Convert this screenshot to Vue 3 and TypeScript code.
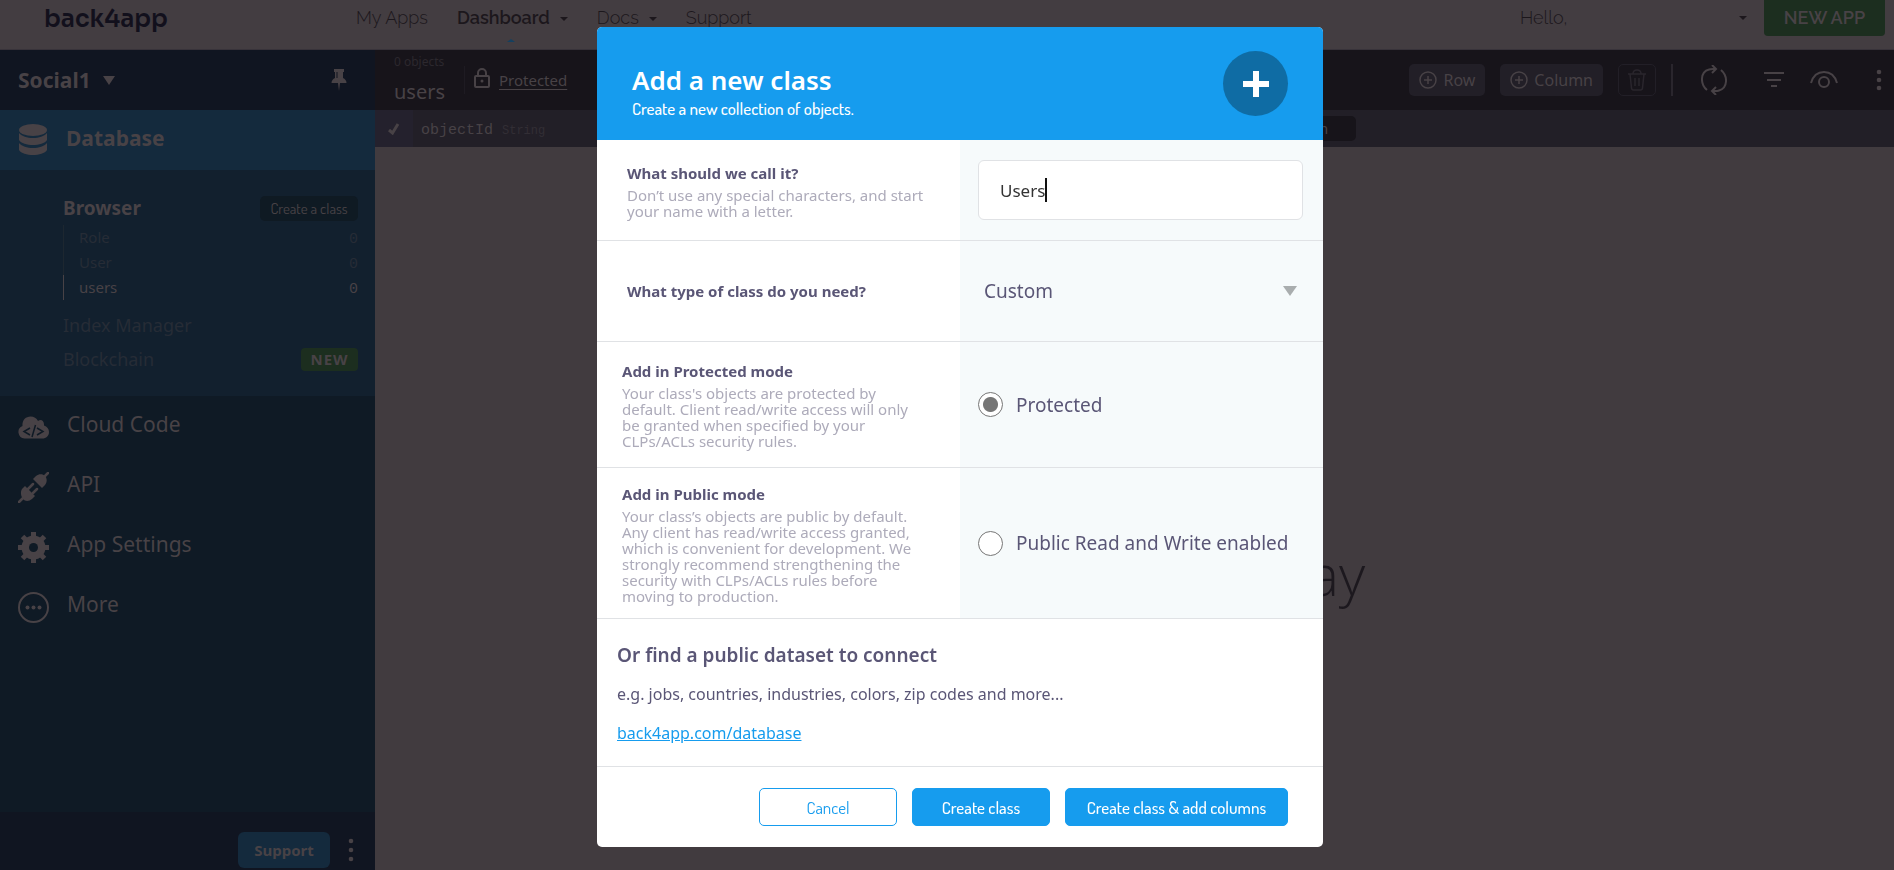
<script setup lang="ts">
import { ref } from 'vue'

interface ClassEntry {
  name: string
  count: number
  active?: boolean
}

const classes: ClassEntry[] = [
  { name: 'Role', count: 0 },
  { name: 'User', count: 0 },
  { name: 'users', count: 0, active: true },
]

const className = ref('Users')
const classType = ref('Custom')
const mode = ref('protected')
</script>

<template>
  <div class="page">
    <header class="topbar">
      <a class="logo" href="#">back4app</a>
      <nav class="topnav">
        <a href="#">My Apps</a>
        <a href="#" class="current">Dashboard<i class="caret"></i></a>
        <a href="#">Docs<i class="caret"></i></a>
        <a href="#">Support</a>
      </nav>
      <button class="hello" type="button"><span>Hello,</span><i class="caret"></i></button>
      <button class="new-app" type="button">NEW APP</button>
    </header>

    <div class="body">
      <aside class="sidebar">
        <div class="app-head">
          <button class="app-name" type="button">Social1<i class="tri"></i></button>
          <svg class="pin" width="16" height="22" viewBox="0 0 16 22"><path d="M3 0h10v3h-1v6c2 1 3.500 2.500 3.500 5H9l-1 8-1-8H.5C.5 11.500 2 10 4 9V3H3z" /><path class="pin-slot" d="M6 3v6" /></svg>
        </div>
        <a class="section" href="#">
          <svg width="28" height="32" viewBox="0 0 28 32"><ellipse cx="14" cy="6" rx="14" ry="6" /><path d="M0 9c3 3.500 8 5 14 5s11-1.500 14-5v7c-2 3.500-8 5-14 5S2 19.500 0 16z" /><path d="M0 19c3 3.500 8 5 14 5s11-1.500 14-5v7c-2 3.500-8 5-14 5S2 29.500 0 26z" /></svg>
          <span>Database</span>
        </a>
        <div class="sub">
          <div class="sub-row">
            <a class="browser" href="#">Browser</a>
            <button class="create" type="button">Create a class</button>
          </div>
          <ul class="classes">
            <li v-for="c in classes" :key="c.name" :class="{ active: c.active }">
              <a href="#">{{ c.name }}</a><span class="count">{{ c.count }}</span>
            </li>
          </ul>
          <div class="sub-row sub-link first"><a href="#">Index Manager</a></div>
          <div class="sub-row sub-link"><a href="#">Blockchain</a><span class="badge">NEW</span></div>
        </div>
        <nav class="menu">
          <a href="#">
            <svg width="31" height="31" viewBox="0 0 31 31"><path d="M6.500 26.500a6.500 6.500 0 0 1-2-12.500C4 8.500 7.500 4.500 12.500 4.500c3.500 0 6 1.500 7.500 4.500 3-2.500 6.500 0 6 4.500 3 1 5 3.500 5 6.500 0 4-3 6.500-6.500 6.500z" /><path class="cut" d="M12 16l-6 3.500 6 3.500M19 16l6 3.500-6 3.500M17.500 13l-3.500 12" /></svg>
            <span>Cloud Code</span>
          </a>
          <a href="#">
            <svg width="31" height="31" viewBox="0 0 31 31"><path class="wire" d="M1 30l5-5M25 6l5-5M10 17l5-5M15 21l4-4" /><path d="M4 17l3-3 10 10-3 3c-3 2.500-7 2.500-9 0s-3-7-1-10z" /><path d="M15 7l3-3c3-2.500 7-2 9 0s2.500 6 0 9l-3 3z" /></svg>
            <span>API</span>
          </a>
          <a href="#">
            <svg width="31" height="31" viewBox="0 0 31 31"><path class="teeth" d="M15.500 0v31M0 15.500h31M4.500 4.500l22 22M26.500 4.500l-22 22" /><circle cx="15.500" cy="15.500" r="12" /><circle class="hole" cx="15.500" cy="15.500" r="4.500" /></svg>
            <span>App Settings</span>
          </a>
          <a href="#">
            <svg width="31" height="31" viewBox="0 0 31 31"><circle class="ring" cx="15.500" cy="15.500" r="14.500" /><circle cx="9.500" cy="15.500" r="2" /><circle cx="15.500" cy="15.500" r="2" /><circle cx="21.500" cy="15.500" r="2" /></svg>
            <span>More</span>
          </a>
        </nav>
        <div class="side-foot">
          <button class="support" type="button">Support</button>
          <button class="icon" type="button" aria-label="More options">
            <svg width="6" height="24" viewBox="0 0 6 24"><circle cx="3" cy="3" r="2.300" /><circle cx="3" cy="12" r="2.300" /><circle cx="3" cy="21" r="2.300" /></svg>
          </button>
        </div>
      </aside>

      <main class="content">
        <div class="toolbar">
          <div class="crumb">
            <span class="objects">0 objects</span>
            <span class="title">users</span>
          </div>
          <a class="perm" href="#">
            <svg width="16" height="20" viewBox="0 0 16 20"><rect x="1" y="8" width="14" height="11" rx="1" /><path d="M4 8V5a4 4 0 0 1 8 0v3" /><circle class="dot" cx="8" cy="13" r="1.500" /></svg>
            <span>Protected</span>
          </a>
          <div class="tools">
            <button class="tool" type="button">
              <svg width="18" height="18" viewBox="0 0 18 18"><circle cx="9" cy="9" r="8" /><path d="M9 5v8M5 9h8" /></svg>Row
            </button>
            <button class="tool" type="button">
              <svg width="18" height="18" viewBox="0 0 18 18"><circle cx="9" cy="9" r="8" /><path d="M9 5v8M5 9h8" /></svg>Column
            </button>
            <button class="tool trash" type="button" aria-label="Delete">
              <svg width="20" height="22" viewBox="0 0 20 22"><path d="M1 5h18M3 5l1.500 14q.2 2 2 2h7q1.800 0 2-2L17 5M6 5q0-4 4-4t4 4M8 9v8M12 9v8" /></svg>
            </button>
            <span class="rule"></span>
            <button class="icon refresh" type="button" aria-label="Refresh">
              <svg width="26" height="30" viewBox="0 0 26 30"><path d="M6 25C-1 19-1 7 8 4.500q2-.8 6-.5M11 0l4 4-4 4M20 5c7 6 7 18-2 20.500q-2 .8-6 .5M15 30l-4-4 4-4" /></svg>
            </button>
            <button class="icon filter" type="button" aria-label="Filter">
              <svg width="22" height="18" viewBox="0 0 22 18"><path d="M1 2h20M4 9h14M8 15h6" /></svg>
            </button>
            <button class="icon eye" type="button" aria-label="Visibility">
              <svg width="28" height="18" viewBox="0 0 28 18"><path d="M1 12C3 5 8 1 14 1s11 4 13 11" /><circle cx="14" cy="11" r="5" /></svg>
            </button>
            <button class="icon more" type="button" aria-label="More">
              <svg width="6" height="22" viewBox="0 0 6 22"><circle cx="3" cy="3" r="2.300" /><circle cx="3" cy="11" r="2.300" /><circle cx="3" cy="19" r="2.300" /></svg>
            </button>
          </div>
        </div>
        <table class="columns">
          <thead>
            <tr>
              <th class="check"><svg width="12" height="12" viewBox="0 0 12 12"><path d="M1 7l3.500 3L10 1" /></svg></th>
              <th class="col">objectId <small>String</small></th>
              <th class="add"><button type="button">Add a new column</button></th>
              <th></th>
            </tr>
          </thead>
        </table>
        <div class="empty">No data to display</div>
      </main>
    </div>

    <div class="overlay">
      <form class="modal" role="dialog" aria-labelledby="modal-title" @submit.prevent>
        <header class="modal-head">
          <div>
            <h1 id="modal-title">Add a new class</h1>
            <p>Create a new collection of objects.</p>
          </div>
          <span class="plus"><svg width="26" height="26" viewBox="0 0 26 26"><path d="M13 0v26M0 13h26" /></svg></span>
        </header>

        <div class="field name-row">
          <div class="label">
            <label for="class-name">What should we call it?</label>
            <p>Don’t use any special characters, and start<br />your name with a letter.</p>
          </div>
          <div class="control">
            <div class="textbox">
              <input id="class-name" v-model="className" type="text" autocomplete="off" /><i class="cursor"></i>
            </div>
          </div>
        </div>

        <div class="field type-row">
          <div class="label"><label for="class-type">What type of class do you need?</label></div>
          <div class="control">
            <select id="class-type" v-model="classType">
              <option>Custom</option>
            </select>
            <i class="arrow"></i>
          </div>
        </div>

        <div class="field mode-row protected">
          <div class="label">
            <strong>Add in Protected mode</strong>
            <p>Your class's objects are protected by<br />default. Client read/write access will only<br />be granted when specified by your<br />CLPs/ACLs security rules.</p>
          </div>
          <div class="control">
            <label class="radio"><input v-model="mode" type="radio" name="mode" value="protected" />Protected</label>
          </div>
        </div>

        <div class="field mode-row public">
          <div class="label">
            <strong>Add in Public mode</strong>
            <p>Your class’s objects are public by default.<br />Any client has read/write access granted,<br />which is convenient for development. We<br />strongly recommend strengthening the<br />security with CLPs/ACLs rules before<br />moving to production.</p>
          </div>
          <div class="control">
            <label class="radio"><input v-model="mode" type="radio" name="mode" value="public" />Public Read and Write enabled</label>
          </div>
        </div>

        <section class="dataset">
          <h2>Or find a public dataset to connect</h2>
          <p>e.g. jobs, countries, industries, colors, zip codes and more...</p>
          <a href="#">back4app.com/database</a>
        </section>

        <footer class="modal-foot">
          <button class="btn ghost" type="button">Cancel</button>
          <button class="btn" type="submit">Create class</button>
          <button class="btn wide" type="button">Create class &amp; add columns</button>
        </footer>
      </form>
    </div>
  </div>
</template>

<style>
html,
body {
  margin: 0;
  background: #413b3f;
  overflow: hidden;
}
</style>

<style scoped>
.page {
  display: flex;
  flex-direction: column;
  height: 100vh;
  font-family: "Noto Sans", "Open Sans", sans-serif;
  color: #484246;
}
.page * {
  box-sizing: border-box;
}
button,
input,
select {
  font: inherit;
  color: inherit;
  background: none;
  border: 0;
  padding: 0;
  margin: 0;
}
a {
  color: inherit;
  text-decoration: none;
}
svg {
  display: block;
  flex: none;
  fill: currentColor;
}
h1,
h2,
p,
ul {
  margin: 0;
  padding: 0;
}

/* top bar */
.topbar {
  display: flex;
  align-items: flex-start;
  flex: none;
  height: 50px;
  padding-right: 9px;
  background: #433d41;
  border-bottom: 1px solid #38333a;
  font-family: Raleway, Lato, sans-serif;
  font-size: 18px;
  line-height: 36px;
  color: #1c171c;
}
.logo {
  width: 312px;
  margin-left: 44px;
  font-family: Sora, Inter, sans-serif;
  font-size: 24px;
  font-weight: 600;
  line-height: 38px;
  color: #12101c;
}
.topnav {
  display: flex;
  flex: 1;
  gap: 29px;
  font-weight: 300;
}
.topnav .current {
  font-weight: 600;
  position: relative;
}
.topnav .current::after {
  content: "";
  position: absolute;
  top: 39px;
  left: 50px;
  border: 4px solid transparent;
  border-top: 0;
  border-bottom: 3px solid #15405f;
}
.caret {
  display: inline-block;
  margin-left: 10px;
  vertical-align: 3px;
  border: 4px solid transparent;
  border-bottom: 0;
  border-top: 4px solid #1c171c;
}
.hello {
  display: flex;
  align-items: center;
  justify-content: space-between;
  width: 227px;
  margin-right: 17px;
  font-weight: 300;
}
.new-app {
  width: 121px;
  height: 36px;
  border-radius: 0 0 4px 4px;
  background: #1c2e1f;
  color: #484246;
  font-weight: 600;
}

.body {
  display: flex;
  flex: 1;
  min-height: 0;
}

/* sidebar */
.sidebar {
  display: flex;
  flex-direction: column;
  flex: none;
  width: 375px;
  background: #0f1a25;
}
.app-head {
  display: flex;
  align-items: center;
  justify-content: space-between;
  height: 60px;
  padding: 0 28px 0 18px;
  background: #101521;
}
.app-name {
  display: flex;
  align-items: center;
  gap: 12px;
  font-size: 21px;
  font-weight: 700;
}
.tri {
  border: 6px solid transparent;
  border-bottom: 0;
  border-top: 9px solid currentColor;
}
.pin-slot {
  stroke: #101521;
  fill: none;
}
.section {
  display: flex;
  align-items: center;
  gap: 19px;
  height: 60px;
  padding-left: 19px;
  background: #142a3d;
  font-size: 21px;
  font-weight: 700;
}
.section span {
  margin-bottom: 5px;
}
.sub {
  height: 226px;
  padding: 24px 17px 0 63px;
  background: #12202e;
}
.sub-row {
  display: flex;
  align-items: center;
  justify-content: space-between;
  height: 28px;
}
.browser {
  font-size: 19px;
  font-weight: 700;
}
.create {
  width: 98px;
  height: 25px;
  border-radius: 5px;
  background: #0f1a23;
  font-family: Dosis, "Liberation Sans Narrow", sans-serif;
  font-size: 15px;
}
.classes {
  list-style: none;
  margin-top: 3px;
}
.classes li {
  display: flex;
  align-items: baseline;
  justify-content: space-between;
  height: 25px;
  padding-left: 15px;
  border-left: 1px solid #1d2730;
  font-size: 15px;
  line-height: 24px;
  color: #262c36;
}
.classes .active {
  border-color: #484246;
  color: #484246;
}
.count {
  font-family: "Liberation Mono", monospace;
}
.sub-link {
  height: 34px;
  font-size: 18px;
  color: #262c36;
}
.sub-link.first {
  margin-top: 8px;
}
.badge {
  width: 57px;
  border-radius: 4px;
  background: #1c2e1f;
  color: #484246;
  font-size: 15px;
  font-weight: 700;
  line-height: 23px;
  letter-spacing: 1px;
  text-align: center;
}
.menu {
  flex: 1;
}
.menu a {
  display: flex;
  align-items: center;
  gap: 18px;
  height: 60px;
  padding-left: 18px;
  font-size: 21px;
}
.menu span {
  margin-bottom: 4px;
}
.menu svg {
  margin-top: 2px;
}
.cut {
  fill: none;
  stroke: #0f1a25;
  stroke-width: 1.500;
}
.wire {
  fill: none;
  stroke: currentColor;
  stroke-width: 2.500;
  stroke-linecap: round;
}
.teeth {
  fill: none;
  stroke: currentColor;
  stroke-width: 5;
}
.hole {
  fill: #0f1a25;
}
.ring {
  fill: none;
  stroke: currentColor;
  stroke-width: 2;
}
.side-foot {
  display: flex;
  align-items: center;
  justify-content: flex-end;
  gap: 18px;
  height: 58px;
  padding: 18px 21px 0 0;
  background: #101521;
}
.support {
  width: 92px;
  height: 36px;
  border-radius: 6px;
  background: #142a3d;
  font-size: 15px;
  font-weight: 700;
}

/* content */
.content {
  display: flex;
  flex-direction: column;
  flex: 1;
  min-width: 0;
}
.toolbar {
  display: flex;
  align-items: center;
  height: 60px;
  flex: none;
  padding-left: 19px;
  background: #17141a;
}
.crumb {
  display: flex;
  flex-direction: column;
  width: 70px;
  height: 60px;
  white-space: nowrap;
}
.objects {
  font-size: 12px;
  line-height: 24px;
  color: #2c282e;
}
.title {
  font-size: 20px;
  line-height: 36px;
}
.perm {
  display: flex;
  align-items: center;
  gap: 9px;
  height: 28px;
  padding-left: 9px;
  border-left: 1px solid #1e1b22;
  font-size: 15px;
}
.perm span {
  text-decoration: underline;
  text-underline-offset: 3px;
}
.perm svg {
  margin-bottom: 4px;
  fill: none;
  stroke: currentColor;
  stroke-width: 2;
}
.perm .dot {
  fill: currentColor;
  stroke: none;
}
.tools {
  display: flex;
  align-items: center;
  margin-left: auto;
  padding-right: 12px;
}
.tool {
  display: flex;
  align-items: center;
  gap: 6px;
  height: 32px;
  margin-right: 15px;
  padding: 0 10px;
  border-radius: 5px;
  background: #221f27;
  font-size: 16px;
}
.tools svg {
  fill: none;
  stroke: currentColor;
  stroke-width: 2;
}
.tools .tool svg {
  stroke-width: 1.500;
}
.trash {
  padding: 0 8px;
  border: 1px solid #221f27;
  background: none;
  color: #2a262d;
}
.rule {
  width: 2px;
  height: 32px;
  margin-right: 28px;
  background: #2a262d;
}
.refresh {
  margin-right: 36px;
}
.filter {
  margin-right: 25px;
}
.eye {
  margin-right: 38px;
}
.tools .more svg {
  fill: currentColor;
  stroke: none;
}
.columns {
  flex: none;
  width: 100%;
  height: 37px;
  border-collapse: collapse;
  background: #221f27;
  table-layout: fixed;
}
.columns th {
  height: 37px;
  padding: 0;
  text-align: left;
  font-weight: 400;
}
.columns .check {
  width: 38px;
  background: #24212d;
}
.check svg {
  margin: 0 auto;
  fill: none;
  stroke: currentColor;
  stroke-width: 3;
}
.columns .col {
  width: 772px;
  padding: 3px 0 0 8px;
  font-family: "Liberation Mono", monospace;
  font-size: 15px;
}
.col small {
  font-size: 12px;
  color: #322e35;
}
.add {
  width: 171px;
}
.add button {
  display: block;
  width: 171px;
  height: 25px;
  padding-right: 6px;
  border-radius: 5px;
  background: #17141a;
  font-size: 14px;
  text-align: center;
}
.empty {
  display: flex;
  align-items: center;
  justify-content: center;
  flex: 1;
  padding-top: 130px;
  font-family: "Open Sans", sans-serif;
  font-size: 57px;
  font-weight: 300;
  color: #1c181e;
}

/* modal */
.overlay {
  position: fixed;
  inset: 0;
  display: flex;
  align-items: center;
  justify-content: center;
  padding: 4px 0 0 26px;
}
.modal {
  width: 726px;
  overflow: hidden;
  border-radius: 5px;
  background: #fff;
  color: #5a5676;
}
.modal-head {
  display: flex;
  align-items: center;
  justify-content: space-between;
  height: 113px;
  padding: 0 35px;
  background: #169cee;
  color: #fff;
}
.modal-head h1 {
  font-size: 26px;
  font-weight: 600;
  line-height: 34px;
}
.modal-head p {
  font-family: Dosis, "Liberation Sans Narrow", sans-serif;
  font-size: 17px;
  font-weight: 500;
  line-height: 24px;
}
.modal-head > div {
  padding-top: 16px;
}
.plus {
  display: grid;
  place-items: center;
  width: 65px;
  height: 65px;
  border-radius: 50%;
  background: #0f6ca4;
}
.plus path {
  stroke: #fff;
  stroke-width: 6;
}
.field {
  display: grid;
  grid-template-columns: 1fr 1fr;
  border-bottom: 1px solid #e0e2e5;
}
.label {
  display: flex;
  flex-direction: column;
  justify-content: center;
  gap: 3px;
  font-size: 15px;
  line-height: 22px;
  padding-left: 30px;
}
.label label,
.label strong {
  font-weight: 700;
}
.label p {
  font-size: 15px;
  line-height: 16px;
  white-space: nowrap;
  color: #adabba;
}
.control {
  display: flex;
  align-items: center;
  padding: 0 20px 0 18px;
  background: #f6fafb;
}
.name-row,
.type-row {
  height: 101px;
}
.mode-row .label {
  padding-left: 25px;
}
.protected {
  height: 126px;
}
.public {
  height: 151px;
}
.textbox {
  display: flex;
  align-items: center;
  width: 100%;
  height: 60px;
  padding-left: 21px;
  border: 1px solid #e0e2e5;
  border-radius: 6px;
  background: #fff;
  color: #333;
  font-size: 17px;
}
.textbox input {
  field-sizing: content;
  outline: 0;
}
.cursor {
  width: 2px;
  height: 24px;
  background: #111;
}
.type-row .control {
  position: relative;
}
.type-row select {
  width: 100%;
  height: 60px;
  padding-left: 6px;
  appearance: none;
  font-size: 19px;
}
.arrow {
  position: absolute;
  right: 26px;
  border: 7px solid transparent;
  border-bottom: 0;
  border-top: 10px solid #a9adae;
  pointer-events: none;
}
.radio {
  display: flex;
  align-items: center;
  gap: 13px;
  font-size: 19px;
  white-space: nowrap;
}
.radio input {
  appearance: none;
  width: 25px;
  height: 25px;
  border: 1px solid #767676;
  border-radius: 50%;
  background: #fff;
}
.radio input:checked {
  background: radial-gradient(circle, #767676 0 7px, #fff 8px);
}
.dataset {
  display: flex;
  flex-direction: column;
  align-items: flex-start;
  gap: 14px;
  height: 148px;
  padding: 23px 20px 0;
  border-bottom: 1px solid #e0e2e5;
  font-size: 16px;
  line-height: 25px;
}
.dataset h2 {
  font-size: 19px;
  font-weight: 600;
  line-height: 26px;
}
.dataset a {
  color: #169cee;
  text-decoration: underline;
}
.modal-foot {
  display: flex;
  align-items: center;
  justify-content: flex-end;
  gap: 15px;
  height: 80px;
  padding-right: 35px;
}
.btn {
  width: 138px;
  height: 38px;
  border: 1px solid #169cee;
  border-radius: 5px;
  background: #169cee;
  color: #fff;
  font-family: Dosis, "Liberation Sans Narrow", sans-serif;
  font-size: 17px;
  font-weight: 500;
}
.btn.wide {
  width: 223px;
}
.btn.ghost {
  background: #fff;
  color: #169cee;
  font-weight: 400;
}
</style>
